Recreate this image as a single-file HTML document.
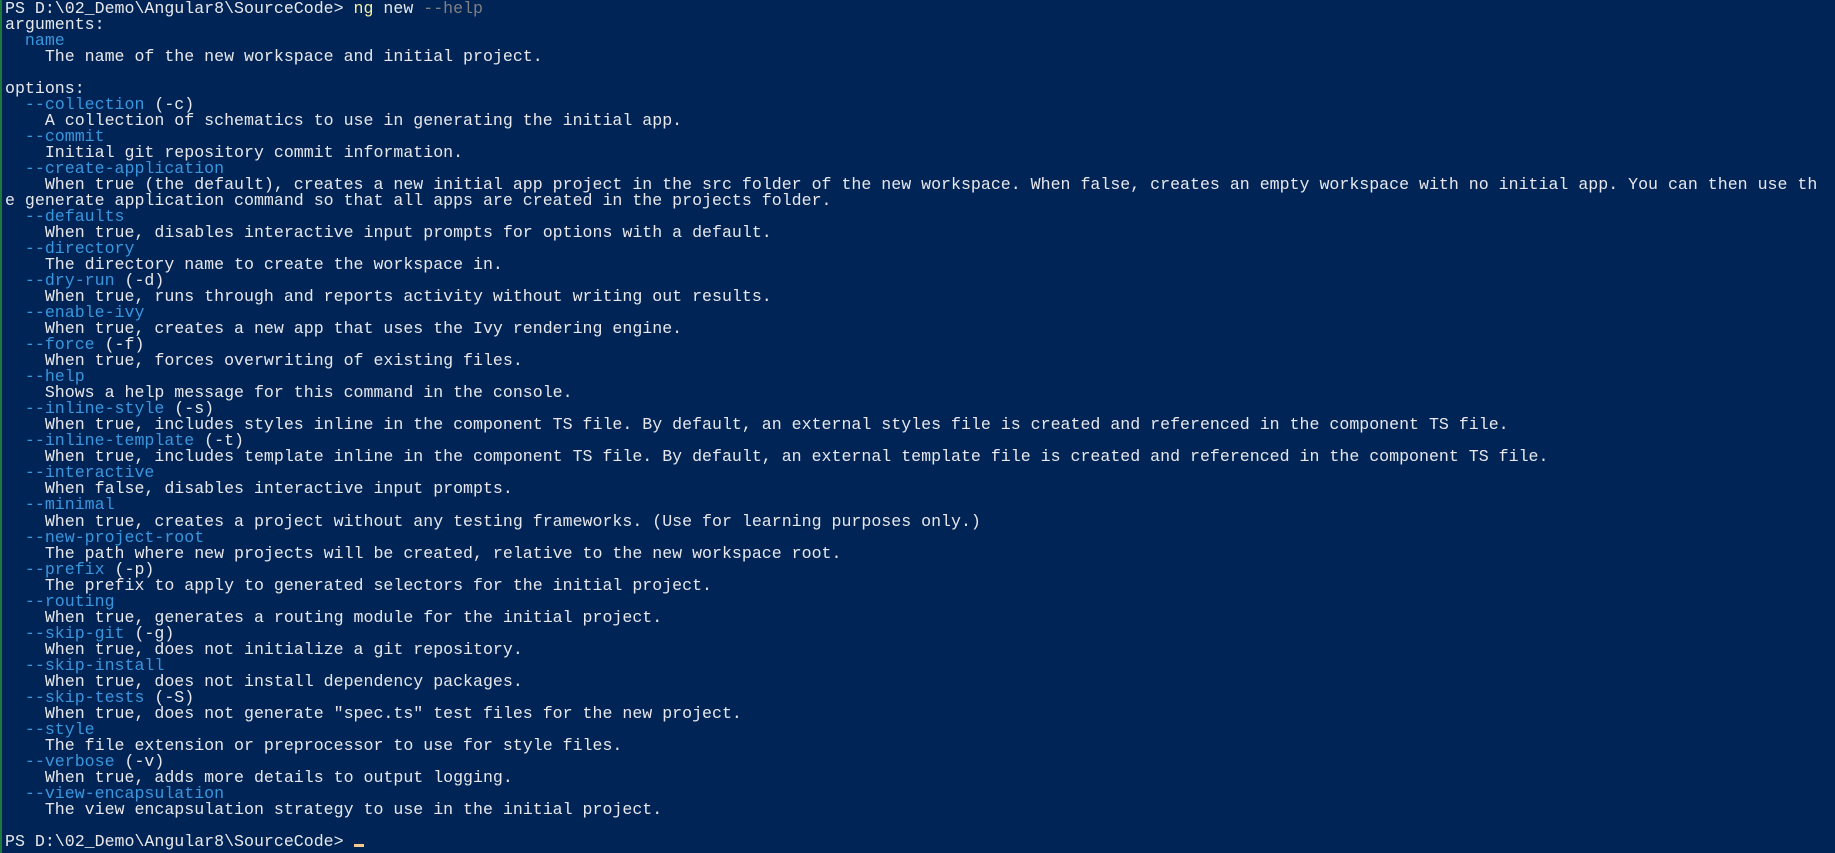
<!DOCTYPE html>
<html><head><meta charset="utf-8"><style>
html,body{margin:0;padding:0;width:1835px;height:853px;overflow:hidden;background:#012456;}
body{border-left:2px solid #1e7a3a;box-sizing:border-box;}
pre{margin:0;padding:1px 0 0 3px;font-family:"Liberation Mono",monospace;font-size:16.6px;line-height:16.02px;color:#e8e8ec;white-space:pre;}
.b{color:#3a96dd}.y{color:#f9f1a5}.g{color:#808080}
.c{display:inline-block;width:10px;height:3px;background:#f5c990;vertical-align:-1px}
</style></head><body><pre>PS D:\02_Demo\Angular8\SourceCode&gt; <span class="y">ng</span> new <span class="g">--help</span>
arguments:
  <span class="b">name</span>
    The name of the new workspace and initial project.

options:
  <span class="b">--collection</span> (-c)
    A collection of schematics to use in generating the initial app.
  <span class="b">--commit</span>
    Initial git repository commit information.
  <span class="b">--create-application</span>
    When true (the default), creates a new initial app project in the src folder of the new workspace. When false, creates an empty workspace with no initial app. You can then use th
e generate application command so that all apps are created in the projects folder.
  <span class="b">--defaults</span>
    When true, disables interactive input prompts for options with a default.
  <span class="b">--directory</span>
    The directory name to create the workspace in.
  <span class="b">--dry-run</span> (-d)
    When true, runs through and reports activity without writing out results.
  <span class="b">--enable-ivy</span>
    When true, creates a new app that uses the Ivy rendering engine.
  <span class="b">--force</span> (-f)
    When true, forces overwriting of existing files.
  <span class="b">--help</span>
    Shows a help message for this command in the console.
  <span class="b">--inline-style</span> (-s)
    When true, includes styles inline in the component TS file. By default, an external styles file is created and referenced in the component TS file.
  <span class="b">--inline-template</span> (-t)
    When true, includes template inline in the component TS file. By default, an external template file is created and referenced in the component TS file.
  <span class="b">--interactive</span>
    When false, disables interactive input prompts.
  <span class="b">--minimal</span>
    When true, creates a project without any testing frameworks. (Use for learning purposes only.)
  <span class="b">--new-project-root</span>
    The path where new projects will be created, relative to the new workspace root.
  <span class="b">--prefix</span> (-p)
    The prefix to apply to generated selectors for the initial project.
  <span class="b">--routing</span>
    When true, generates a routing module for the initial project.
  <span class="b">--skip-git</span> (-g)
    When true, does not initialize a git repository.
  <span class="b">--skip-install</span>
    When true, does not install dependency packages.
  <span class="b">--skip-tests</span> (-S)
    When true, does not generate "spec.ts" test files for the new project.
  <span class="b">--style</span>
    The file extension or preprocessor to use for style files.
  <span class="b">--verbose</span> (-v)
    When true, adds more details to output logging.
  <span class="b">--view-encapsulation</span>
    The view encapsulation strategy to use in the initial project.

PS D:\02_Demo\Angular8\SourceCode&gt; <span class="c"></span></pre></body></html>
